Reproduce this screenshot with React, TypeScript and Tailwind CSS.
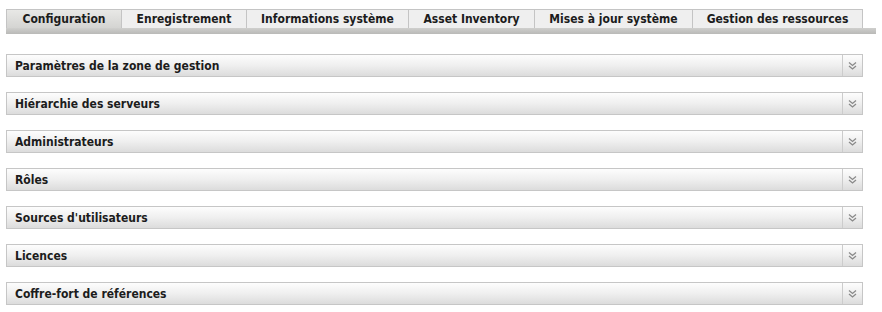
const tabs = [
  { label: "Configuration", w: "w-[115px]", active: true },
  { label: "Enregistrement", w: "w-[125px]", active: false },
  { label: "Informations système", w: "w-[162px]", active: false },
  { label: "Asset Inventory", w: "w-[126px]", active: false },
  { label: "Mises à jour système", w: "w-[158px]", active: false },
  { label: "Gestion des ressources", w: "w-[171px]", active: false },
];

const panels = [
  "Paramètres de la zone de gestion",
  "Hiérarchie des serveurs",
  "Administrateurs",
  "Rôles",
  "Sources d'utilisateurs",
  "Licences",
  "Coffre-fort de références",
];

const DoubleChevron = () => (
  <svg width="9" height="9" viewBox="0 0 9 9" fill="none" stroke="#8a8a8a" strokeWidth="1.3">
    <path d="M1 1.5 L4.5 4.5 L8 1.5" />
    <path d="M1 5 L4.5 8 L8 5" />
  </svg>
);

export default function App() {
  return (
    <div className="w-[882px] h-[312px] bg-white pt-[9px] pl-[6px] font-['DejaVu_Sans_Condensed','DejaVu_Sans',sans-serif] font-bold text-[12px] text-[#1c1c1c]">
      <div className="flex">
        {tabs.map((t, i) => (
          <div
            key={t.label}
            className={`${t.w} h-[19px] flex items-center justify-center border-t border-l border-[#c4c4c4] ${
              i === tabs.length - 1 ? "border-r" : ""
            } ${t.active ? "bg-gradient-to-b from-[#e8e8e6] to-[#d4d4d2]" : "bg-[#efefef]"}`}
          >
            {t.label}
          </div>
        ))}
      </div>
      <div className="w-[870px] h-[6px] bg-gradient-to-b from-[#cfcfcd] to-[#b9b9b7]" />

      <div className="mt-[20px] flex flex-col gap-[15px]">
        {panels.map((p) => (
          <div
            key={p}
            className="w-[857px] h-[23px] flex border border-[#c6c6c6] bg-gradient-to-b from-[#fdfdfd] via-[#efefef] to-[#dcdcdc]"
          >
            <div className="flex-1 flex items-center pl-[8px]">{p}</div>
            <div className="w-[20px] flex items-center justify-center border-l border-[#cccccc]">
              <DoubleChevron />
            </div>
          </div>
        ))}
      </div>
    </div>
  );
}
